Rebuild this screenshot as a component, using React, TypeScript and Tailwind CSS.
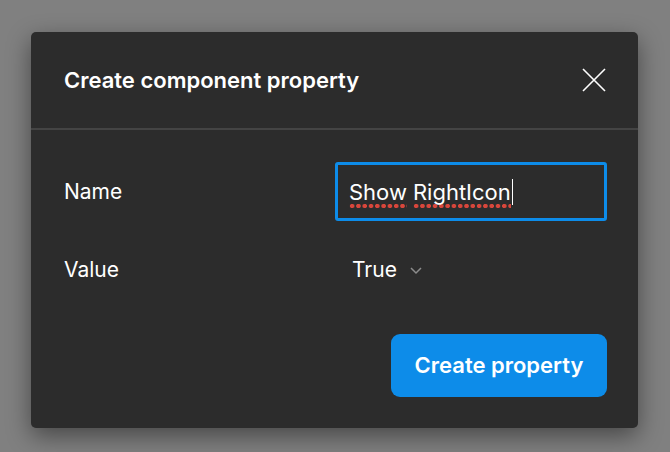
import React from "react";

const dots =
  "bg-[radial-gradient(circle,#d8463b_2px,transparent_2.5px)] bg-[length:6.3px_6px] bg-repeat-x bg-[position:0_100%] pb-[6px]";

export default function App() {
  return (
    <div
      className="w-[670px] h-[452px] bg-[#808080] pt-[32px] pl-[31px]"
      style={{ fontFamily: "Inter, 'Noto Sans', sans-serif" }}
    >
      <div className="w-[607px] h-[396px] bg-[#2c2c2c] rounded-[5px] shadow-[0_8px_24px_rgba(0,0,0,0.45)] flex flex-col">
        <div className="h-[98px] flex items-center justify-between pl-[33px] pr-[31px] border-b-2 border-[#444444] shrink-0">
          <div className="text-[22px] font-semibold text-white">
            Create component property
          </div>
          <svg width="26" height="26" viewBox="0 0 26 26">
            <path d="M2 2 L24 24 M24 2 L2 24" stroke="#ffffff" strokeWidth="1.6" />
          </svg>
        </div>
        <div className="flex-1 flex flex-col pl-[33px] pr-[31px] pt-[32px]">
          <div className="flex items-center h-[59px]">
            <div className="w-[271px] text-[21px] text-white">Name</div>
            <div className="flex-1 h-[59px] border-[3px] border-[#0d8ce9] rounded-[3px] flex items-center pl-[11px]">
              <span className="text-[22px] text-white leading-none flex items-start pt-[6px]">
                <span className={dots}>Show</span>
                <span className="w-[6px]" />
                <span className={dots}>RightIcon</span>
              </span>
              <span className="w-[1.5px] h-[26px] bg-white ml-[1px]" />
            </div>
          </div>
          <div className="flex items-center h-[40px] mt-[29px]">
            <div className="w-[271px] text-[21px] text-white">Value</div>
            <div className="flex items-center ml-[17px]">
              <span className="text-[21px] text-white">True</span>
              <svg width="14" height="10" viewBox="0 0 14 10" className="ml-[12px]">
                <path d="M2 3 L7 8 L12 3" stroke="#8c8c8c" strokeWidth="1.5" fill="none" />
              </svg>
            </div>
          </div>
          <div className="flex justify-end mt-[44px]">
            <button className="w-[216px] h-[63px] rounded-[9px] bg-[#0d8ce9] text-white text-[22px] font-semibold">
              Create property
            </button>
          </div>
        </div>
      </div>
    </div>
  );
}
